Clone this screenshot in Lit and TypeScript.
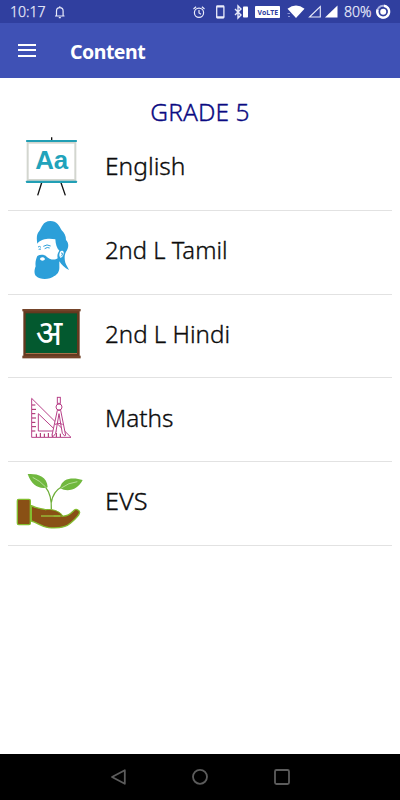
import { LitElement, html, svg, css } from "lit";
import { customElement } from "lit/decorators.js";

const board = svg`
  <path d="M125 22v8M95 158L83 196M153 158l13 38" stroke="#111" stroke-width="4" fill="none"/>
  <rect x="53" y="38" width="143" height="112" fill="#fff" stroke="#d3d6cf" stroke-width="6"/>
  <rect x="48" y="30" width="153" height="6" rx="2" fill="#219fb5"/>
  <rect x="48" y="152" width="153" height="7" rx="2" fill="#219fb5"/>
  <text x="125" y="117" text-anchor="middle" textLength="99" lengthAdjust="spacingAndGlyphs" font-family="Liberation Sans, sans-serif" font-weight="700" font-size="78" fill="#21a3bb">Aa</text>`;

const sage = svg`
  <path fill="#2c9fd9" d="M82 95C79 78 80 66 88 57C95 48 98 27 121 27C141 27 148 42 155 55C163 62 168 72 168 84C177 93 177 107 168 119C163 127 163 143 166 152C169 161 174 166 177 174C164 168 154 158 148 148V162C149 178 143 186 133 192C119 204 90 204 79 193C71 186 73 173 77 163C75 152 78 141 82 132C91 126 104 127 110 134C116 141 133 147 143 139C141 131 143 122 148 116C140 109 137 96 136 82C119 79 94 79 82 95Z"/>
  <path fill="#fff" d="M91 138c5-4 12-2 14 3c-2 6-12 7-15 1zM150 120c3-5 10-5 11 1c1 8-4 14-9 17c-5-4-5-12-2-18z"/>
  <path fill="none" stroke="#2c9fd9" stroke-width="3" d="M100 103q11-8 22-1M104 110q8-6 15-2M84 105q5-4 9 1M86 112q5-2 7 0M153 123q6-2 4 6l-4 4"/>`;

const chalkboard = svg`
  <rect x="40" y="38" width="169" height="140" fill="#64391f"/>
  <rect x="47" y="47" width="154" height="119" fill="#03592f"/>
  <rect x="37" y="34" width="175" height="7" fill="#734329"/>
  <rect x="37" y="174" width="175" height="8" fill="#734329"/>
  <rect x="47" y="166" width="154" height="3" fill="#a8714b"/>
  <text x="117" y="141" text-anchor="middle" font-family="Noto Sans Devanagari, Noto Sans, sans-serif" font-size="104" fill="#fff">अ</text>`;

const geometry = svg`
  <g fill="none" stroke="#b84189" stroke-width="3">
    <path d="M65 40V157H183ZM85 86V138H139Z"/>
    <path stroke="#a51d62" d="M66 60h10M66 73h12M66 86h10M66 99h12M66 112h10M66 125h12M66 138h10M79 156v-10M91 156v-12M103 156v-10M115 156v-12M127 156v-10M139 156v-12M151 156v-10"/>
    <path fill="#fff" d="M142 76L126 151l4 3l7-9L147 86l10 59l7 8l3-2L152 76Z"/>
    <path d="M135 118q12-6 23 0"/>
    <rect x="142" y="37" width="9" height="18" fill="#fff"/>
    <circle cx="147" cy="66" r="9" fill="#fff"/>
  </g>`;

const sprout = svg`
  <path fill="none" stroke="#6eae38" stroke-width="4" d="M124 133C125 106 122 85 107 67M124 112C128 88 138 75 154 66"/>
  <path fill="#70b83e" d="M53 27C78 25 112 31 113 67C88 74 64 60 53 27ZM218 45C194 38 156 35 150 70C176 84 205 72 218 45Z"/>
  <path fill="none" stroke="#d9efc5" stroke-width="2" d="M68 37Q90 47 107 66M202 50Q175 53 154 69"/>
  <g fill="#895015" stroke="#83bd2f" stroke-width="4" stroke-linejoin="round">
    <rect x="22" y="103" width="39" height="76" rx="4"/>
    <path d="M64 122C77 129 89 130 104 133C124 136 149 138 157 153C171 155 181 147 190 138C196 130 208 133 209 142C208 151 195 163 182 174C165 190 139 190 116 188C94 185 83 173 64 168Z"/>
    <path d="M105 134C122 132 145 134 158 153H131" stroke-width="3"/>
  </g>
  <path d="M93 153H151" stroke="#9bc43c" stroke-width="4"/>`;

const subjects = [
  { name: "English", art: board, box: "0 -9 270 251", width: 80.5 },
  { name: "2nd L Tamil", art: sage, box: "0 -6 270 251", width: 122.5 },
  { name: "2nd L Hindi", art: chalkboard, box: "0 -11 270 251", width: 125 },
  { name: "Maths", art: geometry, box: "0 -21 270 251", width: 68.5 },
  { name: "EVS", art: sprout, box: "0 -9 270 251", width: 42.5 },
];

@customElement("app-root")
export class AppRoot extends LitElement {
  static styles = css`
    :host {
      display: flex;
      flex-direction: column;
      height: 800px;
      background: #fff;
      color: #0c0c0c;
      font-family: "Noto Sans", "Open Sans", sans-serif;
    }
    svg { display: block; flex: none; }
    .status {
      display: flex;
      height: 23px;
      background: #303f9f;
      color: #e9ebfa;
    }
    .bar {
      display: flex;
      align-items: center;
      height: 54.5px;
      padding-left: 18px;
      background: #3f51b5;
      color: #fff;
    }
    .menu { display: flex; flex-direction: column; gap: 3.5px; width: 18px; }
    .menu i { height: 2px; background: #fff; }
    .bar h1 {
      margin: 3px 0 0 34px;
      font: 700 19.5px/28px "Noto Sans", sans-serif;
      letter-spacing: -0.5px;
    }
    main { flex: 1; }
    h2 {
      margin: 0;
      height: 49.5px;
      padding-top: 17.5px;
      box-sizing: border-box;
      text-align: center;
      color: #0a0a82;
      font: 350 24.5px/34px "Noto Sans", sans-serif;
      letter-spacing: 0.1px;
      -webkit-text-stroke: 0.35px #0a0a82;
    }
    .row {
      display: flex;
      align-items: center;
      box-sizing: border-box;
      height: 83.75px;
      margin: 0 8px;
      padding-left: 2px;
      border-bottom: 1px solid #e2e2e2;
    }
    .nav {
      display: flex;
      justify-content: center;
      height: 46.5px;
      background: #000;
    }
  `;

  render() {
    return html`
      <div class="status">
        <svg width="400" height="23" viewBox="0 0 400 23" fill="none" stroke="#e9ebfa">
          <g fill="#e9ebfa" stroke="#e9ebfa" stroke-width=".25" font-family="Noto Sans, sans-serif" font-weight="350" font-size="14.500">
            <text x="10" y="17" textLength="35.500" lengthAdjust="spacingAndGlyphs">10:17</text>
            <text x="344" y="17" font-size="14" textLength="27.500" lengthAdjust="spacingAndGlyphs">80%</text>
          </g>
          <path d="M55 16h9.500M56.500 15.500V11q0-3.300 3.300-3.300t3.300 3.300V15.500M59.800 6.300v1.400M58.800 17.700h2" stroke-width="1.200"/>
          <circle cx="199" cy="12.700" r="4.600" stroke-width="1.200"/>
          <path d="M199 10v3l2 1.200M193.500 9l2.600-2.200M204.500 9l-2.600-2.200" stroke-width="1.200"/>
          <rect x="216.700" y="6.200" width="7.200" height="11.600" rx=".8" stroke-width="1.300"/>
          <path d="M216.500 6.500h7.600M216.500 17.300h7.600" stroke-width="2"/>
          <path d="M235 9l6 6-3 3V6l3 3-6 6" stroke-width="1.400"/>
          <rect x="243" y="6.500" width="5" height="11" rx=".8" fill="#fff" stroke="none"/>
          <rect x="255" y="6" width="25" height="12" rx=".8" fill="#fff" stroke="none"/>
          <text x="257.500" y="15" textLength="20.500" lengthAdjust="spacingAndGlyphs" fill="#303f9f" stroke="none" font-family="Open Sans, sans-serif" font-weight="700" font-size="7.800">VoLTE</text>
          <path d="M287.500 8.800q8.500-6.800 17 0l-8.500 9.200z" fill="#fff" stroke="none"/>
          <path d="M287.500 13.500h2.500M288 16.500h2" stroke="#8c96d4"/>
          <path d="M320.300 6.500V17H309.500Z" stroke-width="1.100"/>
          <path d="M337.500 5.500V17.500H325Z" fill="#fff" stroke="none"/>
          <circle cx="383.200" cy="11.700" r="6" stroke="#a8b0df" stroke-width="2"/>
          <path d="M384 5.700a6 6 0 1 1-6.500 4" stroke="#fff" stroke-width="2.400"/>
          <circle cx="383.200" cy="11.700" r="3" fill="#fff" stroke="none"/>
        </svg>
      </div>
      <div class="bar">
        <div class="menu"><i></i><i></i><i></i></div>
        <h1>Content</h1>
      </div>
      <main>
        <h2>GRADE 5</h2>
        ${subjects.map(
          (s) => html`<div class="row">
            <svg width="90" height="83.7" viewBox=${s.box}>${s.art}</svg>
            <svg width="140" height="50" viewBox="0 0 140 50">
              <text x="5" y="32" textLength=${s.width} lengthAdjust="spacingAndGlyphs" font-family="Noto Sans, sans-serif" font-weight="350" font-size="24.500" fill="#0c0c0c" stroke="#0c0c0c" stroke-width=".35">${s.name}</text>
            </svg>
          </div>`
        )}
      </main>
      <div class="nav">
        <svg width="220" height="47" viewBox="0 0 220 47" fill="none" stroke="#5c5c5c" stroke-width="1.800" stroke-linejoin="round">
          <path d="M34.800 16.200V29.800L22 23Z"/>
          <circle cx="110" cy="22.800" r="7"/>
          <rect x="185" y="16" width="14" height="14" rx="1.500"/>
        </svg>
      </div>
    `;
  }
}
